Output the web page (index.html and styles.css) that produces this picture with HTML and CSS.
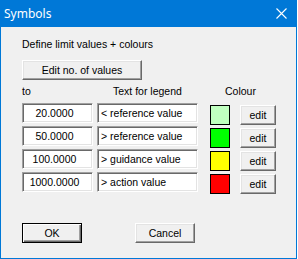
FILE: index.html
```html
<!DOCTYPE html>
<html lang="en">
<head>
    <meta charset="UTF-8">
    <title>Symbols</title>
    <link rel="stylesheet" href="styles.css">
</head>
<body>
    <div class="dlg">
        <div class="dlg-title">
            <span class="dlg-caption">Symbols</span>
            <span class="dlg-close">
                <svg width="11" height="11" viewBox="0 0 11 11">
                    <path d="M0.5 0.5 L10.5 10.5 M10.5 0.5 L0.5 10.5" stroke="#fff" stroke-width="1.1" fill="none"/>
                </svg>
            </span>
        </div>
        <div class="dlg-body">
            <p class="intro-txt">Define limit values + colours</p>
            <button class="btn btn-wide">Edit no. of values</button>
            <div class="col-heads">
                <span class="head-to">to</span>
                <span class="head-legend">Text for legend</span>
                <span class="head-colour">Colour</span>
            </div>
            <div class="lim-rows">
                <div class="lim-row">
                    <input class="fld fld-val" value="20.0000">
                    <input class="fld fld-txt" value="&lt; reference value">
                    <span class="swatch" style="background: #c0ffc0;"></span>
                    <button class="btn btn-edit">edit</button>
                </div>
                <div class="lim-row">
                    <input class="fld fld-val" value="50.0000">
                    <input class="fld fld-txt" value="&gt; reference value">
                    <span class="swatch" style="background: #00ff00;"></span>
                    <button class="btn btn-edit">edit</button>
                </div>
                <div class="lim-row">
                    <input class="fld fld-val" value="100.0000">
                    <input class="fld fld-txt" value="&gt; guidance value">
                    <span class="swatch" style="background: #ffff00;"></span>
                    <button class="btn btn-edit">edit</button>
                </div>
                <div class="lim-row">
                    <input class="fld fld-val" value="1000.0000">
                    <input class="fld fld-txt" value="&gt; action value">
                    <span class="swatch" style="background: #ff0000;"></span>
                    <button class="btn btn-edit">edit</button>
                </div>
            </div>
            <div class="dlg-btns">
                <button class="btn btn-dlg btn-default">OK</button>
                <button class="btn btn-dlg">Cancel</button>
            </div>
        </div>
    </div>
</body>
</html>
```

FILE: styles.css
```css
*, *:before, *:after {
    margin: 0;
    padding: 0;
    box-sizing: border-box;
}
body {
    background: #fff;
    font-family: 'Liberation Sans', Arial, sans-serif;
    font-size: 10.5px;
    color: #000;
}
.dlg {
    width: 297px;
    height: 259px;
    border: 1px solid #0078d7;
    border-top: none;
    background: #f0f0f0;
}
.dlg-title {
    height: 27px;
    background: #0078d7;
    color: #fff;
    display: flex;
    align-items: center;
    justify-content: space-between;
    padding: 0 9px 1px 3px;
}
.dlg-caption {
    font-family: 'Noto Sans', sans-serif;
    font-size: 12px;
}
.dlg-close {
    display: flex;
    padding-top: 1px;
}
.dlg-body {
    padding: 11px 0 0 21px;
}
.intro-txt {
    line-height: 13px;
    height: 13px;
}
.btn {
    font-family: 'Liberation Sans', Arial, sans-serif;
    font-size: 10.5px;
    color: #000;
    background: #f0f0f0;
    border: 1px solid;
    border-color: #fff #696969 #696969 #fff;
    box-shadow: inset -1px -1px 0 #a0a0a0, inset 1px 1px 0 #e3e3e3;
    height: 20px;
    outline: none;
    cursor: pointer;
}
.btn-wide {
    display: block;
    width: 120px;
    margin-top: 9px;
}
.col-heads {
    display: flex;
    margin-top: 5px;
    line-height: 13px;
}
.head-to {
    width: 91px;
}
.head-legend {
    width: 112px;
}
.lim-rows {
    display: flex;
    flex-direction: column;
    gap: 1px;
    margin-top: 5px;
}
.lim-row {
    display: flex;
    align-items: flex-start;
}
.fld {
    height: 20px;
    font-family: 'Liberation Sans', Arial, sans-serif;
    font-size: 10.5px;
    color: #000;
    background: #fff;
    border: 1px solid;
    border-color: #a0a0a0 #fff #fff #a0a0a0;
    box-shadow: inset 1px 1px 0 #696969, inset -1px -1px 0 #e3e3e3;
    outline: none;
}
.fld-val {
    width: 71px;
    text-align: center;
    padding-right: 6px;
}
.fld-txt {
    width: 101px;
    margin-left: 4px;
    padding-left: 3px;
}
.swatch {
    display: block;
    width: 20px;
    height: 20px;
    margin: 2px 0 0 12px;
    border: 1px solid #000;
}
.btn-edit {
    width: 36px;
    margin: 2px 0 0 10px;
}
.dlg-btns {
    display: flex;
    gap: 53px;
    margin-top: 29px;
}
.btn-dlg {
    width: 60px;
}
.btn-default {
    border: 1px solid #000;
    box-shadow: inset 1px 1px 0 #fff, inset -1px -1px 0 #696969, inset -2px -2px 0 #a0a0a0;
}
```
